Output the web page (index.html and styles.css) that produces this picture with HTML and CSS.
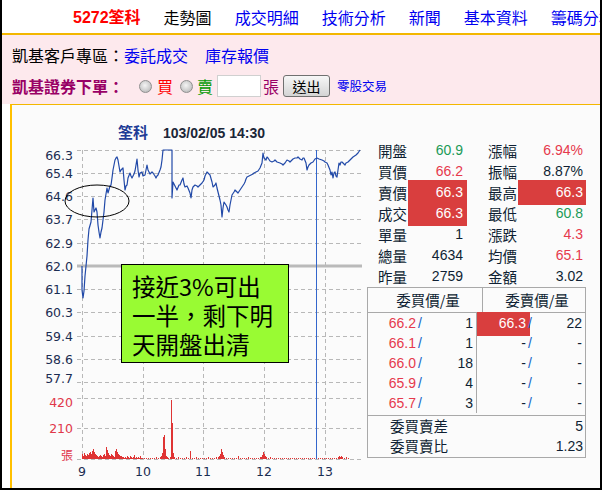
FILE: index.html
```html
<!DOCTYPE html>
<html lang="zh-Hant">
<head>
<meta charset="utf-8">
<title>5272筌科 走勢圖</title>
<link rel="stylesheet" href="styles.css">
</head>
<body>
<div class="page">
  <div class="nav">
    <span class="brand"><span class="num">5272</span>筌科</span>
    <span class="cur">走勢圖</span>
    <a class="lnk">成交明細</a>
    <a class="lnk">技術分析</a>
    <a class="lnk">新聞</a>
    <a class="lnk">基本資料</a>
    <a class="lnk">籌碼分析</a>
  </div>
  <div class="pink">
    <div class="row1">
      <span>凱基客戶專區：</span><a class="lnk">委託成交</a><a class="lnk gap">庫存報價</a>
    </div>
    <div class="row2">
      <span class="order-lb">凱基證券下單：</span>
      <input type="radio" class="radio r1" name="bs">
      <span class="buy">買</span>
      <input type="radio" class="radio r2" name="bs">
      <span class="sell">賣</span>
      <input type="text" class="qty">
      <span class="unit">張</span>
      <button class="send">送出</button>
      <a class="lnk odd">零股交易</a>
    </div>
  </div>
  <div class="chart-box">
    <svg class="chart" width="350" height="383" viewBox="12 105 350 383">
      <text x="118" y="138" class="t-name">筌科</text>
      <text x="163" y="138" class="t-date">103/02/05 14:30</text>
      <g stroke="#b8b8b8" stroke-width="1" stroke-dasharray="4 3" fill="none">
        <path d="M77 150.5H362M77 173.5H362M77 196.5H362M77 219.5H362M77 243.5H362M77 289.5H362M77 312.5H362M77 336.5H362M77 359.5H362M77 382.5H362M77 398.5H362M77 428.5H362M77 459.5H362"/>
        <path d="M82.5 150V459M143.5 150V459M203.5 150V459M264.5 150V459M325.5 150V459"/>
      </g>
      <path d="M77 266H362" stroke="#bababa" stroke-width="3"/>
      <g class="ylab">
        <text x="73" y="155">66.3</text>
        <text x="73" y="173">65.4</text>
        <text x="73" y="196">64.6</text>
        <text x="73" y="219">63.7</text>
        <text x="73" y="243">62.9</text>
        <text x="73" y="266">62.0</text>
        <text x="73" y="289">61.1</text>
        <text x="73" y="312">60.3</text>
        <text x="73" y="336">59.4</text>
        <text x="73" y="359">58.6</text>
        <text x="73" y="378">57.7</text>
      </g>
      <g class="vlab">
        <text x="73" y="402">420</text>
        <text x="73" y="428">210</text>
        <text x="73" y="454" class="cjk">張</text>
      </g>
      <g class="xlab">
        <text x="82" y="471">9</text>
        <text x="143" y="471">10</text>
        <text x="203" y="471">11</text>
        <text x="264" y="471">12</text>
        <text x="325" y="471">13</text>
      </g>
      <path class="vol" d="M82.5 459v-5M83.5 459v-3M84.5 459v-6M85.5 459v-4M86.5 459v-3M87.5 459v-5M88.5 459v-4M89.5 459v-6M90.5 459v-7M91.5 459v-5M92.5 459v-8M93.5 459v-10M94.5 459v-7M95.5 459v-5M96.5 459v-4M97.5 459v-3M98.5 459v-2M99.5 459v-3M100.5 459v-4M101.5 459v-3M102.5 459v-2M103.5 459v-4M104.5 459v-5M105.5 459v-3M106.5 459v-12M107.5 459v-9M108.5 459v-6M109.5 459v-4M110.5 459v-3M111.5 459v-5M112.5 459v-4M113.5 459v-3M114.5 459v-2M115.5 459v-8M116.5 459v-10M117.5 459v-7M118.5 459v-5M119.5 459v-4M120.5 459v-3M121.5 459v-3M122.5 459v-2M123.5 459v-2M124.5 459v-1M125.5 459v-2M126.5 459v-1M127.5 459v-3M128.5 459v-2M129.5 459v-1M130.5 459v-3M131.5 459v-2M132.5 459v-1M133.5 459v-2M134.5 459v-4M135.5 459v-1M136.5 459v-2M137.5 459v-1M138.5 459v-2M139.5 459v-1M140.5 459v-3M141.5 459v-1M142.5 459v-1M144.5 459v-1M146.5 459v-1M148.5 459v-1M150.5 459v-1M152.5 459v-1M154.5 459v-1M156.5 459v-2M158.5 459v-1M160.5 459v-2M161.5 459v-3M162.5 459v-6M163.5 459v-22M164.5 459v-24M165.5 459v-10M166.5 459v-3M167.5 459v-2M168.5 459v-1M170.5 459v-2M171.5 459v-59M172.5 459v-36M173.5 459v-6M174.5 459v-2M176.5 459v-1M178.5 459v-2M180.5 459v-1M182.5 459v-1M184.5 459v-1M186.5 459v-2M188.5 459v-1M190.5 459v-8M192.5 459v-1M194.5 459v-1M196.5 459v-2M198.5 459v-1M200.5 459v-1M202.5 459v-1M204.5 459v-1M206.5 459v-1M208.5 459v-2M210.5 459v-1M212.5 459v-1M214.5 459v-1M216.5 459v-2M218.5 459v-2M219.5 459v-3M220.5 459v-5M221.5 459v-10M222.5 459v-7M223.5 459v-4M224.5 459v-2M226.5 459v-1M228.5 459v-1M230.5 459v-1M232.5 459v-1M234.5 459v-1M236.5 459v-1M238.5 459v-3M240.5 459v-1M242.5 459v-1M244.5 459v-1M246.5 459v-1M248.5 459v-2M250.5 459v-1M252.5 459v-1M254.5 459v-1M256.5 459v-1M258.5 459v-1M260.5 459v-2M261.5 459v-2M262.5 459v-4M263.5 459v-7M264.5 459v-5M265.5 459v-3M266.5 459v-2M268.5 459v-1M270.5 459v-2M272.5 459v-1M274.5 459v-1M276.5 459v-1M278.5 459v-1M280.5 459v-1M282.5 459v-1M284.5 459v-1M286.5 459v-1M288.5 459v-1M290.5 459v-1M292.5 459v-1M294.5 459v-1M296.5 459v-1M298.5 459v-1M300.5 459v-1M302.5 459v-1M304.5 459v-1M306.5 459v-1M308.5 459v-1M310.5 459v-1M312.5 459v-1M314.5 459v-1M318.5 459v-1M320.5 459v-1M322.5 459v-1M324.5 459v-1M326.5 459v-1M328.5 459v-1M330.5 459v-1M332.5 459v-1M334.5 459v-1M336.5 459v-1M338.5 459v-2M339.5 459v-3M340.5 459v-2M341.5 459v-3M342.5 459v-2M344.5 459v-1M346.5 459v-2M348.5 459v-1"/>
      <path d="M316.5 150V459" stroke="#3366cc" stroke-width="1"/>
      <polyline class="price" points="82,266 82,290 83,298 84,291 85,276 87,256 88,240 89,229 91,222 92,210 93,198 94,212 96,208 97,212 98,225 99,232 100,238 101,232 102,228 104,212 105,200 107,188 108,193 110,186 111,185 112,178 113,170 115,160 116,158 117,157 118,160 119,166 120,172 121,170 123,168 124,180 125,190 126,186 127,185 128,178 130,173 131,176 132,178 134,174 135,171 136,165 137,159 138,170 139,177 140,173 142,172 143,176 145,175 146,170 147,165 148,170 150,174 152,172 153,173 155,176 156,178 157,176 158,175 160,170 161,167 162,160 163,150 172,150 172,198 173,182 175,186 177,190 179,185 180,185 182,180 183,178 184,184 185,187 187,186 188,188 190,193 191,198 192,190 193,187 195,185 197,186 198,187 200,185 202,183 204,180 205,176 207,172 209,174 210,175 212,182 213,187 215,185 216,183 217,188 218,192 220,200 221,205 222,217 223,208 224,202 226,205 227,207 228,210 229,212 230,205 232,195 234,192 235,190 237,192 238,193 240,190 242,187 244,184 245,182 246,179 247,177 249,176 251,175 253,174 254,173 256,172 258,171 260,168 262,163 263,153 264,158 266,160 267,157 268,158 270,161 272,162 274,161 275,160 277,162 280,163 282,164 283,165 285,163 287,160 289,161 290,162 292,160 293,159 295,158 297,158 298,157 300,159 302,160 303,158 304,158 306,163 307,170 308,167 309,165 311,163 313,162 315,159 317,158 319,159 322,160 324,161 325,162 327,163 328,165 330,170 331,175 332,172 333,178 334,173 335,172 336,176 337,177 338,170 339,163 340,165 341,162 342,162 344,164 345,165 346,163 348,162 350,160 353,157 356,155 358,153 360,150"/>
      <ellipse cx="97" cy="201" rx="32" ry="16" fill="none" stroke="#000" stroke-width="1"/>
    </svg>
    <div class="side">
      <div class="stats">
        <span class="lb">開盤</span><span class="v g">60.9</span><span></span><span class="lb">漲幅</span><span class="v r">6.94%</span>
        <span class="lb">買價</span><span class="v r">66.2</span><span></span><span class="lb">振幅</span><span class="v">8.87%</span>
        <span class="lb">賣價</span><span class="v hl hl-top">66.3</span><span></span><span class="lb">最高</span><span class="v hl hl-both">66.3</span>
        <span class="lb">成交</span><span class="v hl hl-bot">66.3</span><span></span><span class="lb">最低</span><span class="v g">60.8</span>
        <span class="lb">單量</span><span class="v">1</span><span></span><span class="lb">漲跌</span><span class="v r">4.3</span>
        <span class="lb">總量</span><span class="v">4634</span><span></span><span class="lb">均價</span><span class="v r">65.1</span>
        <span class="lb">昨量</span><span class="v">2759</span><span></span><span class="lb">金額</span><span class="v">3.02</span>
      </div>
      <div class="book">
        <div class="book-head">
          <div class="bh bh-l">委買價/量</div>
          <div class="bh">委賣價/量</div>
        </div>
        <div class="book-body">
          <div class="bcol bcol-l">
            <div class="brow"><span class="bp r">66.2</span><span class="sl">/</span><span class="bq">1</span></div>
            <div class="brow"><span class="bp r">66.1</span><span class="sl">/</span><span class="bq">1</span></div>
            <div class="brow"><span class="bp r">66.0</span><span class="sl">/</span><span class="bq">18</span></div>
            <div class="brow"><span class="bp r">65.9</span><span class="sl">/</span><span class="bq">4</span></div>
            <div class="brow"><span class="bp r">65.7</span><span class="sl">/</span><span class="bq">3</span></div>
          </div>
          <div class="bcol bcol-r">
            <div class="srow"><span class="sp sp-hl">66.3</span><span class="sl">/</span><span class="bq">22</span></div>
            <div class="srow"><span class="sp">-</span><span class="sl">/</span><span class="bq">-</span></div>
            <div class="srow"><span class="sp">-</span><span class="sl">/</span><span class="bq">-</span></div>
            <div class="srow"><span class="sp">-</span><span class="sl">/</span><span class="bq">-</span></div>
            <div class="srow"><span class="sp">-</span><span class="sl">/</span><span class="bq">-</span></div>
          </div>
        </div>
        <div class="book-sum">
          <div class="sum-row"><span class="lb">委買賣差</span><span class="sv">5</span></div>
          <div class="sum-row"><span class="lb">委買賣比</span><span class="sv">1.23</span></div>
        </div>
      </div>
    </div>
  </div>
  <div class="note">接近3%可出<br>一半，剩下明<br>天開盤出清</div>
</div>
</body>
</html>
```

FILE: styles.css
```css
html, body {
  margin: 0;
  padding: 0;
}
body {
  font-family: "Noto Sans CJK TC", "Liberation Sans", sans-serif;
  background: #fff;
}
.page {
  position: relative;
  width: 602px;
  height: 490px;
  overflow: hidden;
  background: #fff;
}
.page::after {
  content: "";
  position: absolute;
  left: 0;
  top: 0;
  right: 0;
  bottom: 0;
  border-left: 2px solid #000;
  border-right: 2px solid #000;
  border-bottom: 2px solid #000;
  pointer-events: none;
}
.num {
  font-family: "Liberation Sans", Arial, sans-serif;
}
.lnk {
  color: #0000f0;
  text-decoration: none;
  cursor: pointer;
}

/* top nav */
.nav {
  height: 33px;
  border-bottom: 2px solid #f3b700;
  display: flex;
  align-items: center;
  padding-left: 73px;
  gap: 23px;
  white-space: nowrap;
  font-size: 16px;
  line-height: 20px;
  padding-top: 1px;
  box-sizing: border-box;
  height: 35px;
}
.brand {
  color: #ff0000;
  font-weight: bold;
}
.cur {
  color: #000;
}

/* pink strip */
.pink {
  background: #fde9ed;
  height: 69px;
  padding-left: 12px;
  box-sizing: border-box;
  padding-top: 9px;
}
.row1, .row2 {
  height: 22px;
  display: flex;
  align-items: center;
  font-size: 16px;
  line-height: 22px;
  white-space: nowrap;
  color: #000;
}
.row2 {
  margin-top: 9px;
}
.row1 .gap {
  margin-left: 17px;
}
.order-lb {
  color: #990066;
  font-weight: bold;
  width: 112px;
}
.radio {
  appearance: none;
  -webkit-appearance: none;
  margin: 0;
  width: 13px;
  height: 13px;
  border-radius: 50%;
  border: 1px solid #8f8f8f;
  box-sizing: border-box;
  background: radial-gradient(circle at 45% 40%, #f4f4f4 0, #cfcfcf 55%, #a9a9a9 100%);
}
.r1 { margin-left: 15px; }
.r2 { margin-left: 7px; }
.buy {
  color: #ff0000;
  margin-left: 5px;
}
.sell {
  color: #009900;
  margin-left: 4px;
}
.qty {
  margin: 0 0 0 4px;
  width: 44px;
  height: 22px;
  box-sizing: border-box;
  border: 1px solid #d0d0d0;
  background: #fff;
  padding: 0;
}
.unit {
  color: #990066;
  margin-left: 2px;
}
.send {
  margin-left: 4px;
  width: 47px;
  height: 22px;
  box-sizing: border-box;
  border: 1px solid #707070;
  border-radius: 3px;
  background: linear-gradient(#f7f7f7, #e6e6e6 50%, #d4d4d4);
  font-family: "Noto Sans CJK TC", sans-serif;
  font-size: 14px;
  line-height: 18px;
  padding: 0;
  color: #000;
}
.odd {
  margin-left: 7px;
  font-size: 12.5px;
}

/* chart box */
.chart-box {
  margin-left: 10px;
  border-top: 1px solid #f3b700;
  border-left: 2px solid #ffc000;
  background: #fbfbfb;
  height: 384px;
  display: flex;
}
.chart {
  display: block;
  flex: none;
}
.t-name {
  font-family: "Noto Sans CJK TC", sans-serif;
  font-size: 15px;
  font-weight: bold;
  fill: #1f3c96;
}
.t-date {
  font-family: "Liberation Sans", Arial, sans-serif;
  font-size: 14px;
  font-weight: bold;
  fill: #1b2638;
}
.ylab text, .vlab text, .xlab text {
  font-family: "DejaVu Sans", Verdana, sans-serif;
  font-size: 12.5px;
  dominant-baseline: central;
}
.ylab text, .vlab text {
  text-anchor: end;
}
.ylab text, .xlab text {
  fill: #1b2d52;
}
.vlab text {
  fill: #e0374a;
}
.vlab .cjk {
  font-family: "Noto Sans CJK TC", sans-serif;
  font-size: 12px;
}
.xlab text {
  text-anchor: middle;
}
.vol {
  stroke: #df3434;
  stroke-width: 1;
  fill: none;
}
.price {
  fill: none;
  stroke: #2149a8;
  stroke-width: 1.2;
  stroke-linejoin: round;
}

/* right side */
.side {
  flex: none;
  width: 238px;
  padding-top: 35px;
  box-sizing: border-box;
}
.stats {
  display: grid;
  grid-template-columns: 30px 59px 21px 30px 68px;
  grid-auto-rows: 21px;
  margin-left: 16px;
  font-size: 14.5px;
  line-height: 21px;
  color: #0f1f33;
  white-space: nowrap;
}
.stats .lb {
  font-family: "Noto Sans CJK TC", sans-serif;
}
.stats .v {
  font-family: "Liberation Sans", Arial, sans-serif;
  font-size: 14px;
  text-align: right;
  padding-right: 4px;
}
.stats .v:nth-child(5n) {
  padding-right: 3px;
}
.g { color: #1c9a57; }
.r { color: #e6394c; }
.hl {
  background: #d93e3e;
  color: #fff;
}
.hl-top { box-shadow: 0 -2px 0 #d93e3e; }
.hl-bot { box-shadow: 0 2px 0 #d93e3e; }
.hl-both { box-shadow: 0 -2px 0 #d93e3e, 0 2px 0 #d93e3e; }

.book {
  margin-left: 5px;
  width: 219px;
  border: 1px solid #a9a9a9;
  box-sizing: border-box;
  color: #0f1f33;
}
.book-head {
  display: flex;
  height: 25px;
  border-bottom: 1px solid #a9a9a9;
  box-sizing: border-box;
}
.bh {
  flex: 1;
  text-align: center;
  font-size: 14.5px;
  line-height: 24px;
  padding-left: 6px;
}
.bh-l {
  flex: none;
  width: 108px;
  border-right: 1px solid #a9a9a9;
}
.book-body {
  display: flex;
  padding-bottom: 2px;
  border-bottom: 1px solid #a9a9a9;
}
.bcol-l {
  width: 108px;
  border-right: 1px solid #a9a9a9;
}
.bcol-r {
  flex: 1;
}
.brow, .srow {
  display: grid;
  height: 20px;
  line-height: 20px;
  font-family: "Liberation Sans", Arial, sans-serif;
  font-size: 14px;
}
.brow {
  grid-template-columns: 48px 7px 1fr;
}
.srow {
  grid-template-columns: 49px 7px 1fr;
}
.bp, .sp {
  text-align: right;
}
.sp-hl {
  background: #d93e3e;
  color: #fff;
  box-shadow: 0 3px 0 #d93e3e, 4px 3px 0 #d93e3e, 4px 0 0 #d93e3e, 0 -1px 0 #d93e3e, 4px -1px 0 #d93e3e;
}
.sl {
  color: #1565c8;
  padding-left: 2px;
  position: relative;
}
.bq {
  text-align: right;
  padding-right: 3px;
}
.book-sum {
  padding-bottom: 1px;
}
.sum-row {
  display: flex;
  justify-content: space-between;
  height: 20px;
  line-height: 20px;
  padding-left: 22px;
  padding-right: 2px;
  font-size: 14.5px;
}
.sv {
  font-family: "Liberation Sans", Arial, sans-serif;
  font-size: 14px;
}

/* callout note */
.note {
  position: absolute;
  left: 121px;
  top: 264px;
  width: 168px;
  height: 99px;
  box-sizing: border-box;
  background: #99fb33;
  border: 1px solid #000;
  padding: 7px 0 0 10px;
  font-size: 23.5px;
  line-height: 29px;
  color: #000;
  white-space: nowrap;
}
```
